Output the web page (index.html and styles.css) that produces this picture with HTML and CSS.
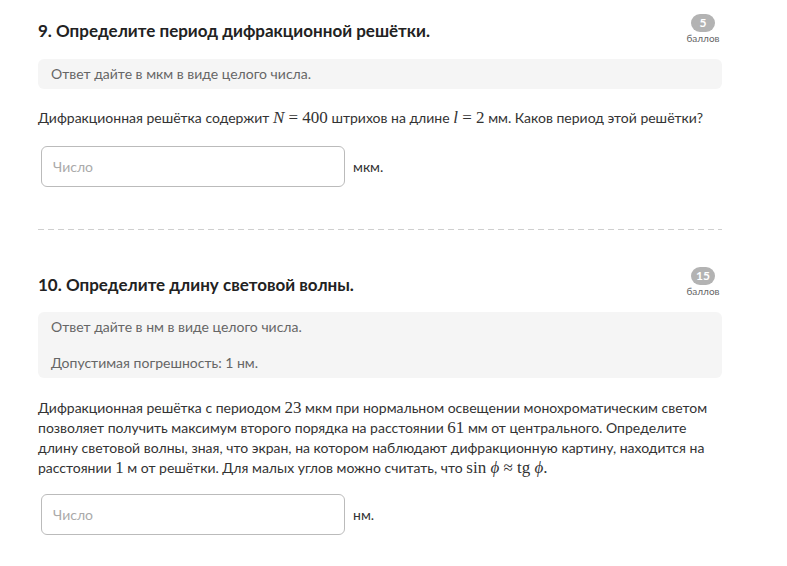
FILE: index.html
```html
<!DOCTYPE html>
<html lang="ru">
<head>
<meta charset="utf-8">
<link rel="stylesheet" href="styles.css">
</head>
<body>
<main class="page">
  <section class="question q9">
    <header class="q-head">
      <h2 class="q-title">9. Определите период дифракционной решётки.</h2>
      <div class="points"><span class="pill">5</span><span class="pts-label">баллов</span></div>
    </header>
    <div class="hint">
      <p>Ответ дайте в мкм в виде целого числа.</p>
    </div>
    <p class="text">Дифракционная решётка содержит <span class="m"><i>N</i> = 400</span> штрихов на длине <span class="m"><i>l</i> = 2</span> мм. Каков период этой решётки?</p>
    <div class="answer">
      <div class="field">Число</div>
      <span class="unit">мкм.</span>
    </div>
  </section>

  <div class="sep"></div>

  <section class="question q10">
    <header class="q-head">
      <h2 class="q-title">10. Определите длину световой волны.</h2>
      <div class="points"><span class="pill">15</span><span class="pts-label">баллов</span></div>
    </header>
    <div class="hint">
      <p>Ответ дайте в нм в виде целого числа.</p>
      <p>Допустимая погрешность: 1 нм.</p>
    </div>
    <p class="text">Дифракционная решётка с периодом <span class="m">23</span> мкм при нормальном освещении монохроматическим светом позволяет получить максимум второго порядка на расстоянии <span class="m">61</span> мм от центрального. Определите длину световой волны, зная, что экран, на котором наблюдают дифракционную картину, находится на расстоянии <span class="m">1</span> м от решётки. Для малых углов можно считать, что <span class="m">sin <i>ϕ</i> ≈ tg <i>ϕ</i>.</span></p>
    <div class="answer">
      <div class="field">Число</div>
      <span class="unit">нм.</span>
    </div>
  </section>
</main>
</body>
</html>
```

FILE: styles.css
```css
html, body {
  margin: 0;
  padding: 0;
  background: #fff;
}
body {
  font-family: Lato, "Noto Sans", sans-serif;
  font-size: 14px;
  color: #333;
}
.page {
  width: 684px;
  margin-left: 38px;
  padding-top: 14px;
}
.q-head {
  display: flex;
  justify-content: space-between;
  align-items: flex-start;
}
.q-title {
  margin: 5px 0 0 0;
  font-family: Lato, "Noto Sans", sans-serif;
  font-weight: 700;
  font-size: 17px;
  line-height: 24px;
  color: #222;
}
.points {
  display: flex;
  flex-direction: column;
  align-items: center;
  width: 38px;
}
.pill {
  display: block;
  min-width: 24px;
  height: 18px;
  border-radius: 9px;
  background: #b3b3b3;
  color: #fff;
  font-weight: 700;
  font-size: 12px;
  line-height: 18px;
  text-align: center;
  box-sizing: border-box;
}
.pts-label {
  font-size: 10px;
  line-height: 12px;
  color: #666;
}
.hint {
  margin-top: 15px;
  background: #f5f5f5;
  border-radius: 6px;
  padding: 5px 13px;
  color: #666;
}
.hint p {
  margin: 0;
  line-height: 20px;
}
.hint p + p {
  margin-top: 16px;
}
.text {
  margin: 19px 0 0 0;
  line-height: 20px;
  color: #333;
}
.m {
  font-family: "Liberation Serif", "DejaVu Serif", serif;
  font-size: 17px;
}
.m i {
  font-style: italic;
}
.answer {
  display: flex;
  align-items: center;
  margin-top: 18px;
  margin-left: 3px;
}
.field {
  width: 304px;
  height: 41px;
  box-sizing: border-box;
  border: 1px solid #bbb;
  border-radius: 6px;
  padding-left: 11px;
  line-height: 39px;
  color: #aaa;
}
.unit {
  margin-left: 8px;
  color: #333;
}
.sep {
  margin-top: 42px;
  height: 1px;
  background: repeating-linear-gradient(to right, #cfcfcf 0 6px, transparent 6px 10px);
}
.q10 .q-head {
  margin-top: 37px;
}
.q10 .q-title {
  margin-top: 6px;
}
.q10 .text {
  margin-top: 20px;
}
.q10 .answer {
  margin-top: 16px;
}
```
